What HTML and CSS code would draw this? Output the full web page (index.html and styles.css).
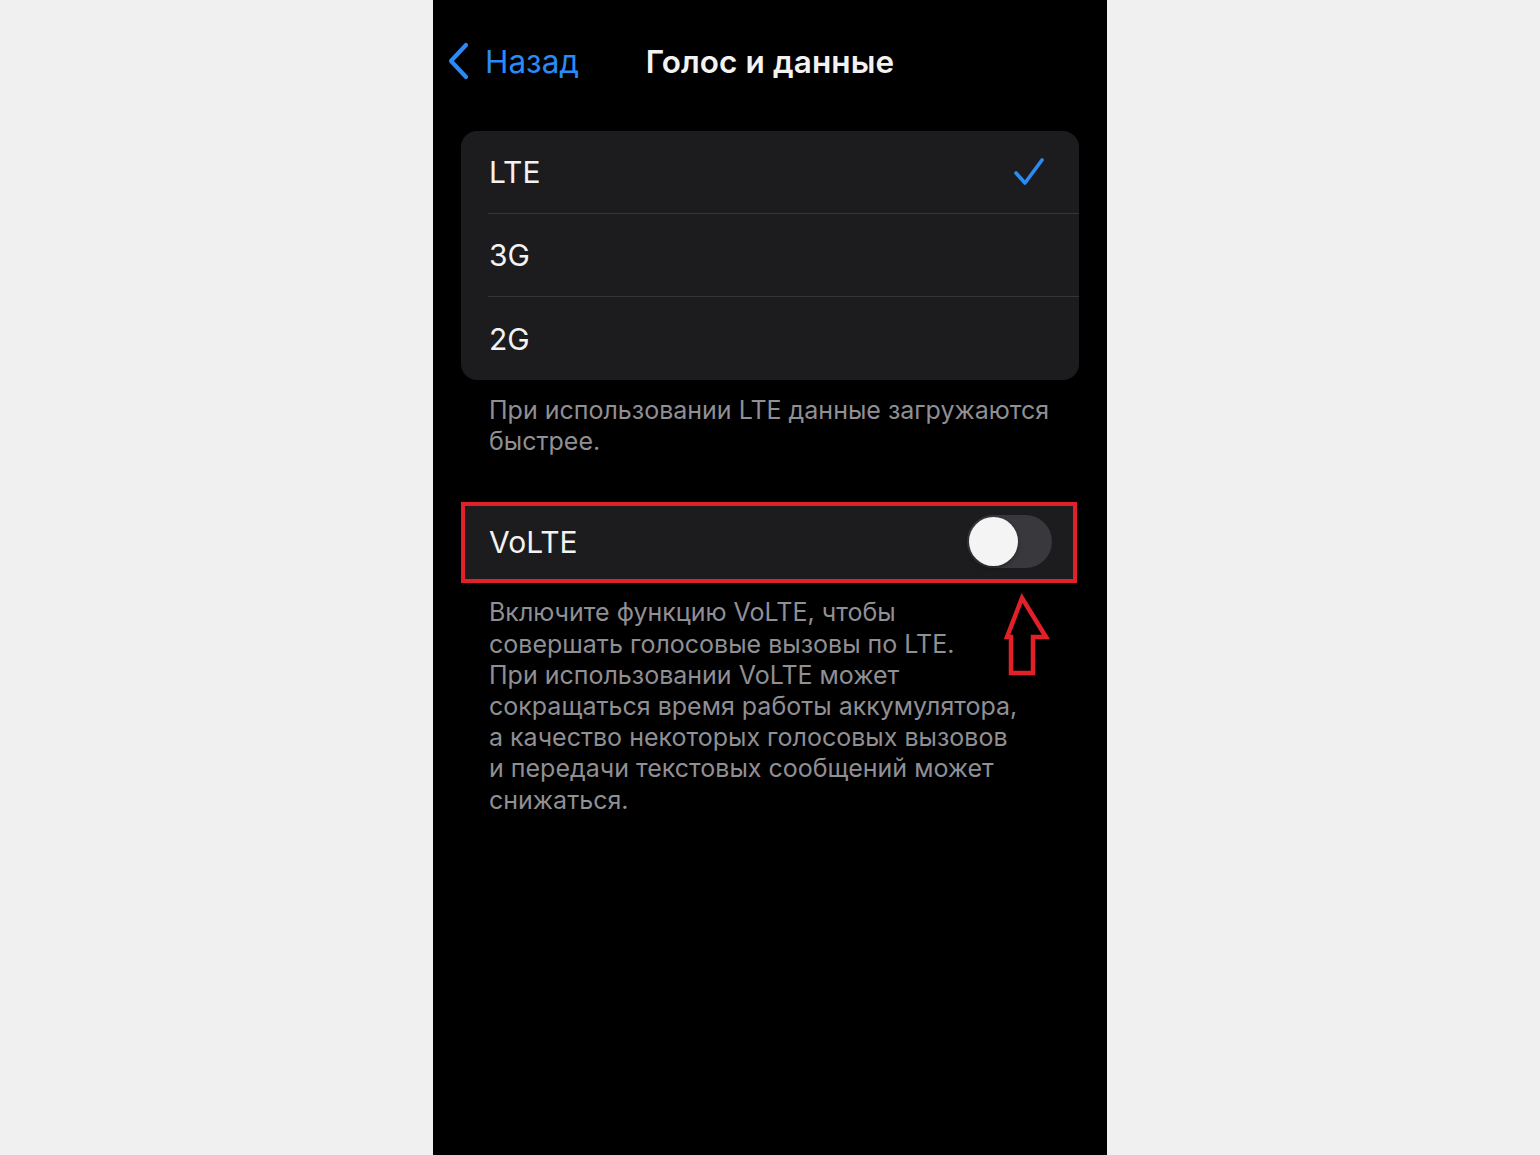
FILE: index.html
```html
<!DOCTYPE html>
<html lang="ru">
<head>
<meta charset="utf-8">
<title>Голос и данные</title>
<link rel="stylesheet" href="styles.css">
</head>
<body>
<div class="phone">
  <div class="nav">
    <div class="back">
      <svg class="chev" width="24" height="38" viewBox="0 0 24 38"><path d="M20 3 L5 19 L20 35" fill="none" stroke="#2a8af6" stroke-width="4.2" stroke-linecap="round" stroke-linejoin="round"/></svg>
      <span>Назад</span>
    </div>
    <div class="title">Голос и данные</div>
    <div></div>
  </div>

  <div class="card">
    <div class="row"><span>LTE</span>
      <svg class="check" width="32" height="30" viewBox="0 0 32 30"><path d="M3 16 L12 26 L29 3" fill="none" stroke="#2a8af6" stroke-width="3.6" stroke-linecap="round" stroke-linejoin="round"/></svg>
    </div>
    <div class="row"><span>3G</span></div>
    <div class="row last"><span>2G</span></div>
  </div>
  <p class="note">При использовании LTE данные загружаются<br>быстрее.</p>

  <div class="volte">
    <span>VoLTE</span>
    <div class="toggle"><div class="knob"></div></div>
  </div>
  <p class="note desc">Включите функцию VoLTE, чтобы<br>совершать голосовые вызовы по LTE.<br>При использовании VoLTE может<br>сокращаться время работы аккумулятора,<br>а качество некоторых голосовых вызовов<br>и передачи текстовых сообщений может<br>снижаться.</p>

  <svg class="arrow" width="56" height="90" viewBox="0 0 56 90"><path d="M22 8 L46 47 L33 47 L33 83 L11 83 L11 47 L7 47 Z" fill="none" stroke="#e2202a" stroke-width="4.5" stroke-linejoin="miter"/></svg>
</div>
</body>
</html>
```

FILE: styles.css
```css
html, body {
  margin: 0;
  padding: 0;
}
body {
  background: #f0f0f0;
  font-family: "Inter", "Roboto", "Noto Sans", sans-serif;
}
.phone {
  position: relative;
  width: 674px;
  height: 1155px;
  margin: 0 auto;
  background: #000;
  padding: 0 28px;
  box-sizing: border-box;
  overflow: hidden;
}
.nav {
  display: grid;
  grid-template-columns: 1fr auto 1fr;
  align-items: center;
  height: 48px;
  padding-top: 37px;
  margin: 0 -12px 0 -15px;
}
.back {
  display: flex;
  align-items: center;
  color: #2a8af6;
  font-size: 31.5px;
  gap: 15px;
}
.chev {
  display: block;
}
.title {
  color: #f2f2f2;
  font-size: 31.5px;
  font-weight: 600;
  letter-spacing: 0.1px;
  margin-left: 3px;
}
.card {
  margin-top: 46px;
  background: #1c1c1e;
  border-radius: 16px;
  overflow: hidden;
}
.row {
  height: 83px;
  margin-left: 27px;
  padding-right: 34px;
  display: flex;
  align-items: center;
  justify-content: space-between;
  color: #f2f2f2;
  font-size: 30px;
  border-bottom: 1px solid #343437;
  box-sizing: border-box;
}
.row.last {
  border-bottom: none;
}
.row span {
  margin-left: 1px;
}
.note {
  margin: 15px 0 0;
  padding-left: 28px;
  color: #8f8f94;
  font-size: 25px;
  line-height: 31.2px;
}
.volte {
  margin-top: 45px;
  width: 616px;
  height: 81px;
  box-sizing: border-box;
  border: 4px solid #e2202a;
  background: #1c1c1e;
  display: flex;
  align-items: center;
  justify-content: space-between;
  padding: 0 21px 2px 24px;
  color: #f2f2f2;
  font-size: 30px;
}
.toggle {
  width: 85px;
  height: 53px;
  border-radius: 27px;
  background: #39393d;
  display: flex;
  align-items: center;
  padding-left: 2px;
  box-sizing: border-box;
}
.knob {
  width: 49px;
  height: 49px;
  border-radius: 50%;
  background: #f4f4f4;
  box-shadow: 0 2px 4px rgba(0,0,0,0.35);
}
.desc {
  margin-top: 14px;
}
.arrow {
  position: absolute;
  left: 567px;
  top: 590px;
}
```
